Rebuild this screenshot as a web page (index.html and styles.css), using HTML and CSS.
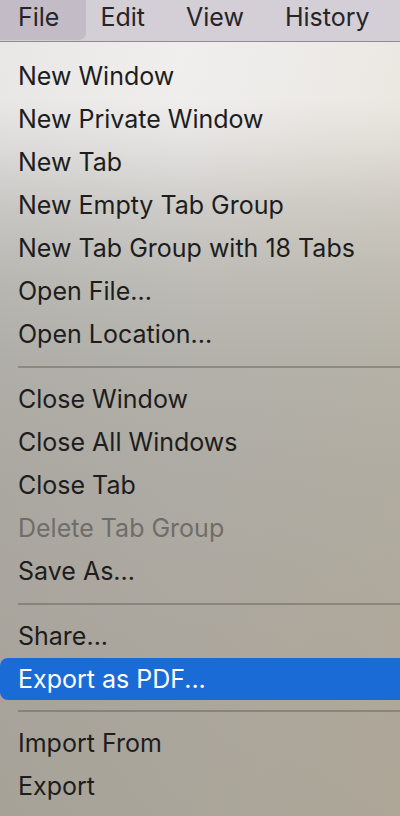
FILE: index.html
```html
<!DOCTYPE html>
<html lang="en">
<head>
<meta charset="utf-8">
<title>File menu</title>
<link rel="stylesheet" href="styles.css">
</head>
<body>
<div class="screen">
  <nav class="menubar">
    <span class="menu-title active">File</span>
    <span class="menu-title">Edit</span>
    <span class="menu-title">View</span>
    <span class="menu-title">History</span>
  </nav>
  <ul class="menu">
    <li class="item">New Window</li>
    <li class="item">New Private Window</li>
    <li class="item">New Tab</li>
    <li class="item">New Empty Tab Group</li>
    <li class="item">New Tab Group with 18 Tabs</li>
    <li class="item">Open File...</li>
    <li class="item">Open Location...</li>
    <li class="sep"></li>
    <li class="item">Close Window</li>
    <li class="item">Close All Windows</li>
    <li class="item">Close Tab</li>
    <li class="item disabled">Delete Tab Group</li>
    <li class="item">Save As...</li>
    <li class="sep"></li>
    <li class="item">Share...</li>
    <li class="item selected">Export as PDF...</li>
    <li class="sep"></li>
    <li class="item">Import From</li>
    <li class="item">Export</li>
  </ul>
</div>
</body>
</html>
```

FILE: styles.css
```css
html, body {
  margin: 0;
  padding: 0;
}
body {
  width: 400px;
  height: 816px;
  overflow: hidden;
  font-family: Inter, "Liberation Sans", sans-serif;
  color: #1d1d1d;
}
.screen {
  width: 400px;
  height: 816px;
  display: flex;
  flex-direction: column;
  background:
    linear-gradient(90deg, rgba(120,118,118,0.06) 0%, rgba(0,0,0,0) 45%, rgba(200,180,130,0.10) 100%),
    linear-gradient(180deg, #f0efef 0px, #efeeed 100px, #e2e0de 150px, #cdcbc7 210px, #bdbbb6 280px, #b3b1ab 360px, #aeaba4 480px, #aca79e 640px, #aaa59a 816px);
}
.menubar {
  height: 41px;
  flex: none;
  display: flex;
  align-items: stretch;
  gap: 41px;
  padding-left: 18px;
  background: #d4ced7;
  border-bottom: 1px solid #8e8b90;
  font-size: 25px;
  line-height: 34px;
  color: #262427;
}
.menu-title {
  display: block;
}
.menu-title.active {
  padding: 0 27px 0 18px;
  margin: 0 -27px 0 -18px;
  background: #c3bcc6;
  border-bottom-right-radius: 7px;
  height: 40px;
}
.menu {
  list-style: none;
  margin: 0;
  padding: 13px 0 0 0;
  font-size: 25px;
}
.item {
  height: 43px;
  line-height: 43px;
  padding-left: 18px;
  white-space: nowrap;
}
.item.disabled {
  color: #6f6d69;
}
.item.selected {
  height: 42px;
  line-height: 42px;
  margin-bottom: 1px;
  background: #1b6bd6;
  color: #ffffff;
  border-radius: 8px 0 0 8px;
}
.sep {
  height: 2px;
  margin: 10px 0 10px 18px;
  background: rgba(95, 90, 82, 0.45);
}
```
